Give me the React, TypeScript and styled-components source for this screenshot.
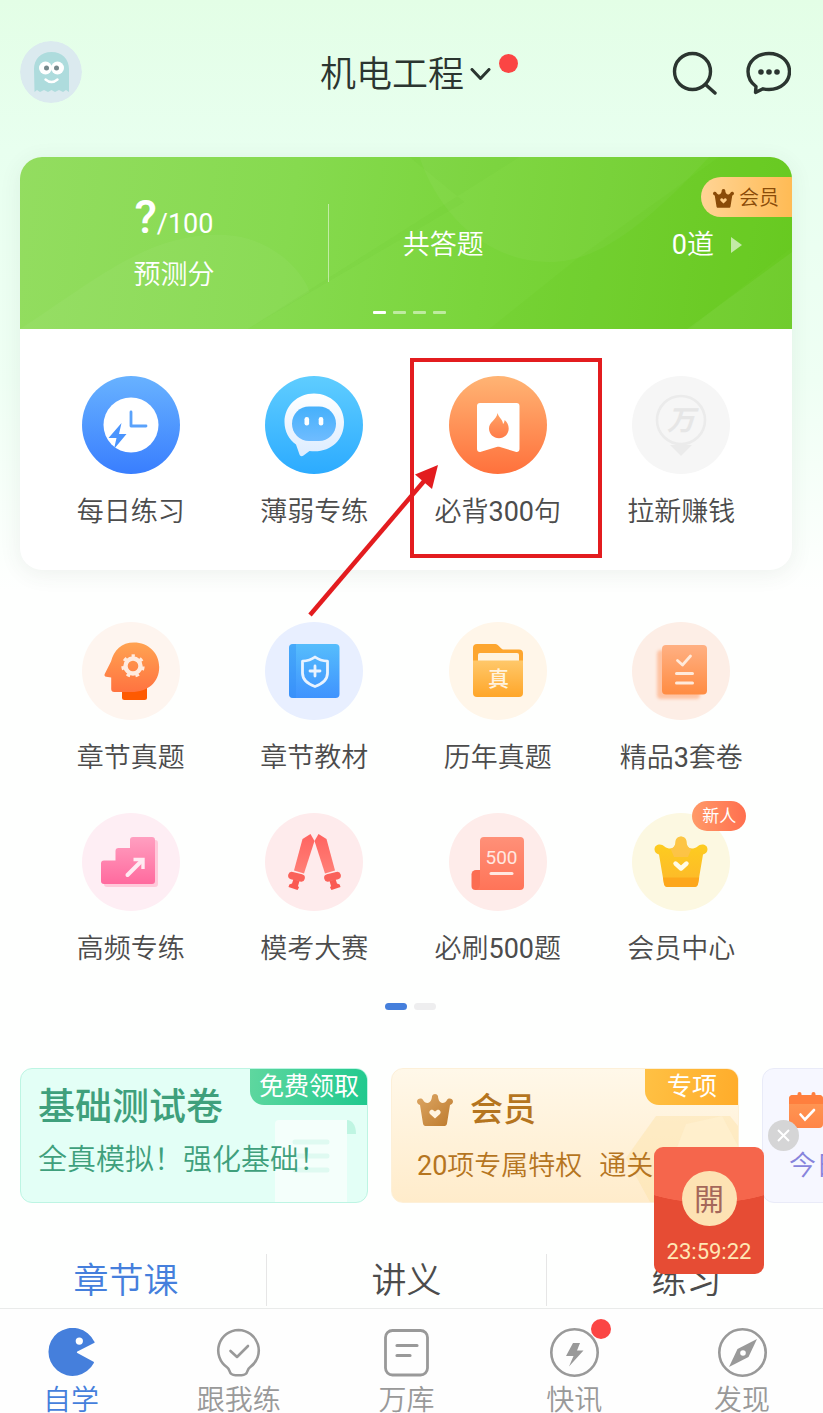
import React from "react";
import styled, { createGlobalStyle } from "styled-components";

const GlobalStyle = createGlobalStyle`
  *, *::before, *::after { box-sizing: border-box; }
  body {
    margin: 0;
    background: #fefffe;
    font-family: Roboto, "Noto Sans CJK SC", sans-serif;
    font-weight: 350;
    color: #4c4c4c;
  }
  button {
    border: 0;
    padding: 0;
    background: none;
    font: inherit;
    color: inherit;
    cursor: pointer;
  }
  a { color: inherit; text-decoration: none; }
  svg { display: block; }
`;

const Page = styled.div`
  position: relative;
  overflow: hidden;
  background: linear-gradient(180deg, #e3fee6 0, #e8ffef 150px, #effff4 380px, #fefffe 590px);
`;

const Content = styled.main`
  padding: 0 31px 0 20px;
`;

/* Latin digits sit one weight above the surrounding Chinese text. */
const Digits = styled.span`
  font-weight: 400;
`;

/* ---------- header ---------- */

const Header = styled.header`
  display: grid;
  grid-template-columns: 1fr auto 1fr;
  align-items: center;
  padding: 41px 32px 54px 20px;
`;

const Avatar = styled.button`
  width: 62px;
  height: 62px;
  border-radius: 50%;
  overflow: hidden;
`;

const Subject = styled.button`
  position: relative;
  display: flex;
  align-items: center;
  gap: 6px;
  padding-top: 6px;
  font-size: 36px;
  line-height: 44px;
  color: #2b3530;
`;

const RedDot = styled.span<{ $top: number; $left: string; $size: number }>`
  position: absolute;
  top: ${(p) => p.$top}px;
  left: ${(p) => p.$left};
  width: ${(p) => p.$size}px;
  height: ${(p) => p.$size}px;
  border-radius: 50%;
  background: #fb4544;
`;

const HeaderActions = styled.div`
  display: flex;
  justify-content: flex-end;
  gap: 27px;
  padding-top: 2px;
`;

/* ---------- score card ---------- */

const Card = styled.section`
  border-radius: 22px;
  background: #fff;
  box-shadow: 0 4px 22px rgba(60, 80, 70, 0.08);
`;

const Banner = styled.div`
  position: relative;
  display: grid;
  grid-template-columns: 2fr 3fr;
  align-items: center;
  height: 172px;
  overflow: hidden;
  border-radius: 22px 22px 0 0;
  background: linear-gradient(98deg, #93dd60 0%, #86da4f 35%, #7ad53b 60%, #69ca22 100%);
  color: #fff;
  font-size: 27px;
  line-height: 36px;
`;

const BannerArt = styled.svg`
  position: absolute;
  inset: 0;
  width: 100%;
  height: 100%;
`;

const Score = styled.div`
  position: relative;
  display: flex;
  flex-direction: column;
  align-items: center;
  gap: 15px;
  height: 78px;
  padding-top: 5px;
  justify-content: center;
  border-right: 1px solid rgba(255, 255, 255, 0.5);
`;

const ScoreValue = styled.div`
  display: flex;
  align-items: baseline;
  line-height: 36px;
  font-weight: 400;
  strong {
    font-size: 46px;
    font-weight: 500;
  }
`;

const Answered = styled.a`
  position: relative;
  display: flex;
  align-items: center;
  padding: 0 50px 0 74px;
  margin-top: 3px;
  b {
    flex: 1;
    font-weight: inherit;
  }
  svg { margin-left: 17px; }
`;

const VipTag = styled.a`
  position: absolute;
  top: 20px;
  right: 0;
  display: flex;
  align-items: center;
  gap: 5px;
  height: 40px;
  padding: 2px 13px 0 12px;
  border-radius: 20px 0 0 20px;
  background: linear-gradient(90deg, #ffd495, #ffbb55);
  color: #8a4b08;
  font-size: 20px;
`;

const Dashes = styled.div`
  position: absolute;
  left: 7px;
  right: 0;
  bottom: 15px;
  display: flex;
  justify-content: center;
  gap: 7px;
`;

const Dash = styled.i<{ $on?: boolean }>`
  width: 13px;
  height: 3px;
  border-radius: 1px;
  background: ${(p) => (p.$on ? "#fff" : "rgba(255,255,255,0.5)")};
`;

/* ---------- icon grid ---------- */

const IconGrid = styled.div<{ $pad: string }>`
  display: grid;
  grid-template-columns: repeat(4, 1fr);
  row-gap: 37px;
  padding: ${(p) => p.$pad};
`;

const Cell = styled.div`
  position: relative;
`;

const Entry = styled.button`
  display: flex;
  flex-direction: column;
  align-items: center;
  gap: 20px;
  width: 100%;
  font-size: 27px;
  line-height: 36px;
  white-space: nowrap;
`;

const IconWrap = styled.span`
  position: relative;
  width: 98px;
  height: 98px;
`;

const NewBadge = styled.span`
  position: absolute;
  top: -12px;
  left: 60px;
  width: 54px;
  height: 30px;
  border-radius: 15px;
  background: linear-gradient(90deg, #ff9a68, #ff6f4f);
  color: #fff;
  font-size: 17px;
  line-height: 30px;
  font-weight: 400;
`;

const HighlightBox = styled.div`
  position: absolute;
  top: -18px;
  left: 4px;
  width: 192px;
  height: 200px;
  border: 4px solid #e31c1f;
  pointer-events: none;
`;

const HighlightArrow = styled.svg`
  position: absolute;
  top: 88px;
  left: -99px;
  z-index: 1;
  pointer-events: none;
`;

const Pager = styled.div`
  display: flex;
  justify-content: center;
  gap: 7px;
  padding: 36px 0 58px 8px;
`;

const PagerDot = styled.i<{ $on?: boolean }>`
  width: 22px;
  height: 7px;
  border-radius: 4px;
  background: ${(p) => (p.$on ? "#457fdc" : "#eeeeef")};
`;

/* ---------- promo strip ---------- */

const PromoStrip = styled.section`
  display: flex;
  gap: 23px;
  padding-left: 20px;
  overflow: hidden;
`;

const Promo = styled.a<{ $bg: string; $edge: string; $color: string }>`
  position: relative;
  flex: 0 0 348px;
  height: 135px;
  overflow: hidden;
  border: 1px solid ${(p) => p.$edge};
  border-radius: 12px;
  background: ${(p) => p.$bg};
  color: ${(p) => p.$color};
`;

const PromoArt = styled.svg`
  position: absolute;
  right: 0;
  bottom: 0;
`;

const PromoBody = styled.div<{ $left: number; $top: number; $gap: number }>`
  position: relative;
  display: flex;
  flex-direction: column;
  gap: ${(p) => p.$gap}px;
  padding: ${(p) => p.$top}px 0 0 ${(p) => p.$left}px;
  white-space: nowrap;
`;

const PromoTitle = styled.div<{ $size: number }>`
  display: flex;
  align-items: center;
  gap: 17px;
  height: 44px;
  font-size: ${(p) => p.$size}px;
  line-height: 44px;
  font-weight: 500;
`;

const PromoText = styled.div<{ $size: number }>`
  display: flex;
  gap: 17px;
  font-size: ${(p) => p.$size}px;
  line-height: 36px;
`;

const PromoTag = styled.span<{ $bg: string; $width: number }>`
  position: absolute;
  top: -1px;
  right: -1px;
  width: ${(p) => p.$width}px;
  height: 37px;
  border-radius: 0 12px 0 14px;
  background: ${(p) => p.$bg};
  color: #fff;
  font-size: 25px;
  line-height: 37px;
  font-weight: 400;
  text-align: center;
`;

/* ---------- tabs and bottom bar ---------- */

const Tabs = styled.div`
  display: grid;
  grid-template-columns: repeat(3, 1fr);
  margin: 51px -3px 2px -14px;
`;

const Tab = styled.button<{ $on?: boolean }>`
  height: 52px;
  padding-top: 4px;
  font-size: 35px;
  line-height: 48px;
  color: ${(p) => (p.$on ? "#457fdc" : "#4c4c4c")};
  & + & { border-left: 1px solid #e6e6e6; }
`;

const BottomBar = styled.nav`
  border-top: 1px solid #e9ebea;
  background: #fefefe;
`;

const BottomItems = styled.div`
  display: grid;
  grid-template-columns: repeat(5, 1fr);
  margin: 0 -3px 0 -13px;
  padding-top: 19px;
`;

const BottomItem = styled.a<{ $on?: boolean }>`
  display: flex;
  flex-direction: column;
  align-items: center;
  gap: 11px;
  font-size: 28px;
  line-height: 25px;
  color: ${(p) => (p.$on ? "#457fdc" : "#999")};
`;

const BottomIcon = styled.span`
  position: relative;
`;

/* ---------- floating red packet ---------- */

const Packet = styled.aside`
  position: absolute;
  right: 59px;
  bottom: 139px;
  width: 110px;
  height: 127px;
`;

const PacketButton = styled.button`
  display: flex;
  flex-direction: column;
  align-items: center;
  gap: 13px;
  width: 100%;
  height: 100%;
  padding-top: 24px;
  border-radius: 9px;
  background: radial-gradient(ellipse 110px 56px at 50% 0, #f5664c 99%, #e64c34 100%);
  color: #ffe7b4;
  font-size: 22px;
  line-height: 26px;
  font-weight: 400;
`;

const Coin = styled.span`
  width: 55px;
  height: 55px;
  border-radius: 50%;
  background: #fde2b3;
  color: #a5675a;
  font-size: 30px;
  line-height: 57px;
  font-weight: 400;
`;

const PacketClose = styled.button`
  position: absolute;
  top: -27px;
  right: -35px;
  display: flex;
  align-items: center;
  justify-content: center;
  width: 31px;
  height: 31px;
  border-radius: 50%;
  background: #d5d5d6;
`;

/* ---------- drawings ---------- */

const Grad = ({ id, from, to }: { id: string; from: string; to: string }) => (
  <linearGradient id={id} x1="0" y1="0" x2="0" y2="1">
    <stop offset="0" stopColor={from} />
    <stop offset="1" stopColor={to} />
  </linearGradient>
);

const Round = ({ fill, children }: { fill: string; children: React.ReactNode }) => (
  <svg width="98" height="98" viewBox="0 0 98 98" aria-hidden="true">
    <circle cx="49" cy="49" r="49" fill={fill} />
    {children}
  </svg>
);

const DailyIcon = () => (
  <Round fill="url(#daily)">
    <defs><Grad id="daily" from="#68b2ff" to="#397efe" /></defs>
    <circle cx="49" cy="49" r="27.5" fill="#fff" />
    <path d="M49 36v14h15" fill="none" stroke="#5aa2fb" strokeWidth="2.8" strokeLinecap="round" strokeLinejoin="round" />
    <path d="M39.5 47 26.500 62h8L32 73l12.500-15H37z" fill="#4a94fd" />
  </Round>
);

const WeakIcon = () => (
  <Round fill="url(#weak)">
    <defs>
      <Grad id="weak" from="#5fcdff" to="#2cabff" />
      <Grad id="weakBubble" from="#ffffff" to="#dcecff" />
      <Grad id="weakFace" from="#45b0fb" to="#6fbcff" />
    </defs>
    <path d="M49 17.5c-16.5 0-29.5 12.500-29.5 28.500 0 9.500 4.500 17.500 11.500 22.500l3.500 10c.7 2 2.500 2 4 1l6-4.500c20 2.500 34.500-10 34.500-29 0-16-13.500-28.500-30-28.500z" fill="url(#weakBubble)" />
    <rect x="27" y="30.5" width="44" height="34.5" rx="17" fill="url(#weakFace)" />
    <rect x="39.5" y="41" width="4.6" height="8.5" rx="2.2" fill="#fff" />
    <rect x="53.7" y="41" width="4.6" height="8.5" rx="2.2" fill="#fff" />
  </Round>
);

const ReciteIcon = () => (
  <Round fill="url(#recite)">
    <defs>
      <Grad id="recite" from="#ffb474" to="#ff713c" />
      <Grad id="flame" from="#ffa366" to="#ff7b48" />
    </defs>
    <path d="M31 27h36.500a3 3 0 0 1 3 3v43c0 2.500-2 3.500-4 2.800L51 71c-1.200-.4-2.200-.4-3.400 0L32 75.800c-2 .7-4-.3-4-2.800V30a3 3 0 0 1 3-3z" fill="#fff" />
    <path d="M48.500 37c1 4.500 5.500 6.500 5.500 11 1-1 1.500-2.500 1.700-4 2.500 2 4 5 4 8.500 0 5.500-4.200 9.700-9.700 9.700s-10-4.200-10-9.700c0-6.500 7.500-8.500 8.500-15.500z" fill="url(#flame)" />
  </Round>
);

const EarnIcon = () => (
  <Round fill="#f6f6f6">
    <circle cx="49" cy="44" r="24" fill="none" stroke="#ebebeb" strokeWidth="2.6" />
    <path d="M38 69h22L49 80z" fill="#ebebeb" />
    <text x="49" y="54" textAnchor="middle" fontSize="28" fontWeight="700" fontStyle="italic" fill="#e6e6e6">万</text>
  </Round>
);

const HeadIcon = () => (
  <Round fill="#fef5ef">
    <defs><Grad id="head" from="#ffa352" to="#ff7340" /></defs>
    <rect x="40" y="60" width="25" height="18" rx="2.5" fill="#fe5a02" />
    <path d="M52 20.500c-12.500 0-20 7.500-23 19l-6.300 12.500c-.6 1.500 0 2.500 1.500 2.700l5 .8V67c0 2 1 3 3 3h17c17 0 28-10 28-25 0-14-11-24.500-25.200-24.500z" fill="url(#head)" />
    <circle cx="51" cy="44" r="7.5" fill="none" stroke="#ffebdf" strokeWidth="4.4" />
    <circle cx="51" cy="44" r="10" fill="none" stroke="#ffebdf" strokeWidth="3.4" strokeDasharray="3.6 5.376" strokeDashoffset="1.8" transform="rotate(-90 51 44)" />
  </Round>
);

const BookIcon = () => (
  <Round fill="#e8efff">
    <defs><Grad id="book" from="#56bdfc" to="#3f93fe" /></defs>
    <rect x="24" y="22" width="50.5" height="54" rx="4" fill="url(#book)" />
    <path d="M28 22h3v54h-3a4 4 0 0 1-4-4V26a4 4 0 0 1 4-4z" fill="#2f8df5" opacity=".4" />
    <path d="M50 35c4 3 8 4 12.500 4.200V51c0 6.500-5.500 11-12.500 13.500C43 62 37.500 57.500 37.500 51V39.200C42 39 46 38 50 35z" fill="none" stroke="#e9f3ff" strokeWidth="2.8" strokeLinejoin="round" />
    <path d="M50 44v10M45 49h10" stroke="#e9f3ff" strokeWidth="2.8" strokeLinecap="round" />
  </Round>
);

const FolderIcon = () => (
  <Round fill="#fff6e9">
    <defs><Grad id="folder" from="#ffc86a" to="#ffa629" /></defs>
    <path d="M28 22h17c2 0 3 .4 4.300 1.600l3 2.800c1 .9 2 1.200 3.500 1.200H70a4 4 0 0 1 4 4V50H24V26a4 4 0 0 1 4-4z" fill="#fda62f" />
    <rect x="29" y="31" width="41" height="14" rx="2" fill="#fff3df" />
    <path d="M24 38.500h50V71a4 4 0 0 1-4 4H28a4 4 0 0 1-4-4z" fill="url(#folder)" />
    <text x="49.5" y="64" textAnchor="middle" fontSize="21" fontWeight="500" fill="#fff3df">真</text>
  </Round>
);

const PapersIcon = () => (
  <Round fill="#fdeee6">
    <defs>
      <Grad id="papers" from="#ffb083" to="#ff8c42" />
      <filter id="soft"><feGaussianBlur stdDeviation="1.6" /></filter>
    </defs>
    <rect x="25" y="28" width="43" height="49" rx="4" fill="#ff9a62" opacity=".5" filter="url(#soft)" />
    <rect x="30" y="23" width="45" height="49.5" rx="4" fill="url(#papers)" />
    <path d="M45.500 38.500l5 4.500 8-9" fill="none" stroke="#ffeadb" strokeWidth="2.8" strokeLinecap="round" strokeLinejoin="round" />
    <path d="M44.500 51.500h16M44.500 61h16" stroke="#ffeadb" strokeWidth="3" strokeLinecap="round" />
  </Round>
);

const stairs = "M51 24h19a3 3 0 0 1 3 3v41a3 3 0 0 1-3 3H22a3 3 0 0 1-3-3V50.500a3 3 0 0 1 3-3h11.500V38a3 3 0 0 1 3-3H48v-8a3 3 0 0 1 3-3z";

const StairsIcon = () => (
  <Round fill="#feeef4">
    <defs><Grad id="stairs" from="#ff9fc0" to="#ff6a9e" /></defs>
    <path d={stairs} transform="translate(3 3)" fill="#ffb9cf" opacity=".7" />
    <path d={stairs} fill="url(#stairs)" />
    <path d="M45.500 62 59 48.500" stroke="#ffeaf2" strokeWidth="4" strokeLinecap="round" />
    <path d="M51.500 46.500h9.500V56" fill="none" stroke="#ffeaf2" strokeWidth="3.4" />
  </Round>
);

const Sword = () => (
  <g>
    <path d="M45.500 21 49.500 28 39 60.500 29 57.500 37.500 26z" fill="url(#sword)" />
    <path d="M28.500 66l6 2-1.500 5 1 1.500-1.500 2.500-9-3 .8-2.500 2.700-1z" fill="#fa5a52" />
    <rect x="23" y="60" width="17" height="7.5" rx="3.7" transform="rotate(15 31.5 63.7)" fill="#fa625a" />
  </g>
);

const SwordsIcon = () => (
  <Round fill="#feebec">
    <defs><Grad id="sword" from="#ff6360" to="#ff8077" /></defs>
    <Sword />
    <g transform="translate(99 0) scale(-1 1)"><Sword /></g>
  </Round>
);

const ScrollIcon = () => (
  <Round fill="#feecea">
    <defs><Grad id="scroll" from="#ff9078" to="#ff7458" /></defs>
    <path d="M27 57h8v20h-8.500a4 4 0 0 1-4-4V61.500A4.500 4.500 0 0 1 27 57z" fill="#fb6d52" />
    <path d="M35 24h36a4 4 0 0 1 4 4v45a4 4 0 0 1-4 4H27c3-1 4-3 4-6V28a4 4 0 0 1 4-4z" fill="url(#scroll)" />
    <text x="52.5" y="51" textAnchor="middle" fontSize="19" fontWeight="400" fill="#ffe8e1">500</text>
    <path d="M42 60.500h21" stroke="#ffe8e1" strokeWidth="3" strokeLinecap="round" />
  </Round>
);

const CrownIcon = () => (
  <Round fill="#fcf8e1">
    <defs><Grad id="crown" from="#fdd01e" to="#fdb72a" /></defs>
    <path d="M43.500 29a5.500 5.500 0 0 1 11 0c0 3 2 6.500 5 6.500 2.500 0 4-.5 6-2 3-3.500 10-2.500 10 2.700 0 3-2 4.600-4.500 5.300L66 71c-.5 2-1.600 3-3.500 3h-27c-1.900 0-3-1-3.500-3l-5-29.500c-2.500-.7-4.500-2.300-4.500-5.300 0-5.200 7-6.200 10-2.700 2 1.500 3.500 2 6 2 3 0 5-3.500 5-6.500z" fill="url(#crown)" />
    <path d="M43.500 29a5.500 5.500 0 0 1 11 0c0 3 2 6.500 5 6.500L56 44H42l-3.500-8.500c3 0 5-3.500 5-6.500z" fill="#fcc255" opacity=".7" />
    <path d="M31 64.500h36.200L66 71c-.5 2-1.600 3-3.500 3h-27c-1.900 0-3-1-3.500-3z" fill="#fda71b" />
    <path d="M43.500 50.500l5.500 5 5.500-5" fill="none" stroke="#fffbe6" strokeWidth="4.4" strokeLinecap="round" strokeLinejoin="round" />
  </Round>
);

const SmallCrown = ({ size, fill, heart }: { size: number; fill: string; heart: string }) => (
  <svg width={size} height={size} viewBox="0 0 36 36" aria-hidden="true">
    <defs>
      <linearGradient id="bronze" x1="0" y1="0" x2="1" y2="1">
        <stop offset="0" stopColor="#dda765" />
        <stop offset="1" stopColor="#bd7a2c" />
      </linearGradient>
    </defs>
    <path d="M15 4a3.200 3.200 0 0 1 6 0c0 3 1.500 7 4.500 7 2 0 3.500-1 4.500-3 1.500-2.500 6-1.500 6 1.500 0 2-1.500 3-3 3.500l-3 18.500c-.3 1.500-1 2.500-2.500 2.500h-19C7 34 6.300 33 6 31.500L3 13c-1.500-.5-3-1.500-3-3.500C0 6.500 4.500 5.500 6 8c1 2 2.500 3 4.500 3 3 0 4.500-4 4.500-7z" fill={fill} />
    <path d="M18 26.500l-5-4.500c-1.800-2 .5-5.500 3.300-3.800L18 19.500l1.700-1.300c2.800-1.700 5.100 1.800 3.300 3.800z" fill={heart} />
  </svg>
);

const GhostAvatar = () => (
  <svg width="62" height="62" viewBox="0 0 62 62" aria-hidden="true">
    <circle cx="31" cy="31" r="31" fill="#dbeaef" />
    <path d="M14 28c0-10 7-17 17.500-17S49 18 49 28v23l-3-2-3 2-4-2-4 2-3.500-2-3.500 2-4-2-4 2-3-2-2.500 2z" fill="#aedcdd" />
    <circle cx="25.500" cy="27" r="6.500" fill="#fff" />
    <circle cx="37.500" cy="27" r="6.500" fill="#fff" />
    <circle cx="26.500" cy="27" r="2.500" fill="#76898c" />
    <circle cx="36.500" cy="27" r="2.500" fill="#76898c" />
    <path d="M25.500 38.500q6 5 12 0" fill="none" stroke="#fff" strokeWidth="2.4" strokeLinecap="round" />
  </svg>
);

const outline = { fill: "none", strokeLinecap: "round", strokeLinejoin: "round" } as const;

const PacManIcon = () => (
  <svg width="49" height="49" viewBox="-1 0 50 49" aria-hidden="true">
    <path d="M48.500 14.500 31 23.500a.9.900 0 0 0 0 1.600L47.500 34a.8.800 0 0 1 .3 1.100A24.500 24.500 0 1 1 48.200 13.400a.8.800 0 0 1 .3 1.100z" fill="#457fdc" />
    <circle cx="33" cy="12.800" r="3.700" fill="#fff" />
  </svg>
);

const BulbIcon = () => (
  <svg width="49" height="49" viewBox="0 0 49 49" {...outline} stroke="#999" strokeWidth="2.6" aria-hidden="true">
    <path d="M24.500 2A20.500 20.500 0 0 0 13 39.300c1.700 1.200 2 2.200 2.500 3.700.8 2.800 3 4.200 6 4.200h6c3 0 5.200-1.400 6-4.200.5-1.500.8-2.500 2.500-3.700A20.500 20.500 0 0 0 24.500 2z" />
    <path d="M16.500 23l6.500 6 11-11" />
  </svg>
);

const LibraryIcon = () => (
  <svg width="49" height="49" viewBox="0 0 49 49" {...outline} stroke="#999" strokeWidth="2.8" aria-hidden="true">
    <rect x="3.500" y="2.500" width="42" height="44.500" rx="7" />
    <path d="M15 17.500h20M15 27.500h13" strokeWidth="3.2" />
  </svg>
);

const NewsIcon = () => (
  <svg width="49" height="49" viewBox="0 0 49 49" aria-hidden="true">
    <circle cx="24.500" cy="24.500" r="23.200" fill="none" stroke="#999" strokeWidth="2.6" />
    <path d="M23 15h7l-3 7.500h6.500L19 38.500 23.500 28H16z" fill="#999" />
  </svg>
);

const CompassIcon = () => (
  <svg width="49" height="49" viewBox="0 0 49 49" aria-hidden="true">
    <circle cx="24.500" cy="24.500" r="23.200" fill="none" stroke="#999" strokeWidth="2.6" />
    <path d="M39 11 30.500 29 11 39l8.500-18z" fill="#999" />
    <circle cx="25" cy="25" r="2.800" fill="#fff" />
  </svg>
);

/* ---------- data ---------- */

type EntryData = { label: string; icon: React.ReactNode; marked?: boolean; badge?: string };

const quick: EntryData[] = [
  { label: "每日练习", icon: <DailyIcon /> },
  { label: "薄弱专练", icon: <WeakIcon /> },
  { label: "必背300句", icon: <ReciteIcon />, marked: true },
  { label: "拉新赚钱", icon: <EarnIcon /> },
];

const features: EntryData[] = [
  { label: "章节真题", icon: <HeadIcon /> },
  { label: "章节教材", icon: <BookIcon /> },
  { label: "历年真题", icon: <FolderIcon /> },
  { label: "精品3套卷", icon: <PapersIcon /> },
  { label: "高频专练", icon: <StairsIcon /> },
  { label: "模考大赛", icon: <SwordsIcon /> },
  { label: "必刷500题", icon: <ScrollIcon /> },
  { label: "会员中心", icon: <CrownIcon />, badge: "新人" },
];

const bottom = [
  { label: "自学", icon: <PacManIcon />, on: true },
  { label: "跟我练", icon: <BulbIcon /> },
  { label: "万库", icon: <LibraryIcon /> },
  { label: "快讯", icon: <NewsIcon />, dot: true },
  { label: "发现", icon: <CompassIcon /> },
];

const Mixed = ({ text }: { text: string }) => (
  <span>
    {text.split(/(\d+)/).map((part, i) => (i % 2 ? <Digits key={i}>{part}</Digits> : part))}
  </span>
);

const Entries = ({ items, pad }: { items: EntryData[]; pad: string }) => (
  <IconGrid $pad={pad}>
    {items.map((it) => (
      <Cell key={it.label}>
        <Entry type="button">
          <IconWrap>
            {it.icon}
            {it.badge && <NewBadge>{it.badge}</NewBadge>}
          </IconWrap>
          <Mixed text={it.label} />
        </Entry>
        {it.marked && (
          <>
            <HighlightBox />
            <HighlightArrow width="134" height="154" viewBox="0 0 134 154" aria-hidden="true">
              <path d="M3 151 118 16" stroke="#e31c1f" strokeWidth="4.5" />
              <path d="M131 1 108 10.500 125 25z" fill="#e31c1f" />
            </HighlightArrow>
          </>
        )}
      </Cell>
    ))}
  </IconGrid>
);

export default function App() {
  return (
    <>
      <GlobalStyle />
      <Page>
        <Header>
          <Avatar type="button" aria-label="头像"><GhostAvatar /></Avatar>
          <Subject type="button">
            机电工程
            <svg width="21" height="14" viewBox="0 0 21 14" {...outline} stroke="#2b3530" strokeWidth="3" aria-hidden="true">
              <path d="M2 1.500 10.500 10.500 19 1.500" />
            </svg>
            <RedDot $top={7} $left="calc(100% + 8px)" $size={19} />
          </Subject>
          <HeaderActions>
            <button type="button" aria-label="搜索">
              <svg width="46" height="44" viewBox="0 0 46 44" {...outline} stroke="#2b3530" strokeWidth="3.4" aria-hidden="true">
                <circle cx="20.500" cy="20.500" r="18" />
                <path d="M33.500 33.500 43 42" />
              </svg>
            </button>
            <button type="button" aria-label="消息">
              <svg width="46" height="44" viewBox="0 0 46 44" {...outline} stroke="#2b3530" strokeWidth="3.4" aria-hidden="true">
                <path d="M24 2.500C12 2.500 3 10.500 3 20.500c0 6.500 3.200 11.500 8 15l-.5 6 7.500-3.700c1.500.4 3.500.7 6 .7 12 0 20.500-8 20.500-18s-8.500-18-20.500-18z" />
                <g fill="#2b3530" stroke="none">
                  <circle cx="16" cy="21" r="2.800" />
                  <circle cx="24" cy="21" r="2.800" />
                  <circle cx="32" cy="21" r="2.800" />
                </g>
              </svg>
            </button>
          </HeaderActions>
        </Header>

        <Content>
          <Card>
            <Banner>
              <BannerArt viewBox="0 0 773 172" preserveAspectRatio="none" aria-hidden="true">
                <path d="M0 172C80 120 130 75 205 78c50 2 80 40 85 57l-62 37z" fill="#fff" opacity=".04" />
                <path d="M228 172 500 0H390L445 45z" fill="#4fb810" opacity=".05" />
                <path d="M400 0c20 60 70 105 130 105 45 0 90-30 160-105z" fill="#fff" opacity=".04" />
                <path d="M560 100 700 0h73v90L670 172H470z" fill="#55bb10" opacity=".08" />
                <path d="M773 95v77H668z" fill="#fff" opacity=".05" />
              </BannerArt>
              <Score>
                <ScoreValue><strong>?</strong>/100</ScoreValue>
                <span>预测分</span>
              </Score>
              <Answered href="#answers">
                <b>共答题</b>
                <Mixed text="0道" />
                <svg width="11" height="16" viewBox="0 0 11 16" aria-hidden="true">
                  <path d="M0 0 11 8 0 16z" fill="#fff" opacity=".6" />
                </svg>
              </Answered>
              <VipTag href="#vip">
                <SmallCrown size={21} fill="#8a4b08" heart="#ffcd86" />
                会员
              </VipTag>
              <Dashes><Dash $on /><Dash /><Dash /><Dash /></Dashes>
            </Banner>
            <Entries items={quick} pad="47px 19px 40px" />
          </Card>
          <Entries items={features} pad="52px 19px 0" />
          <Pager><PagerDot $on /><PagerDot /></Pager>
        </Content>

        <PromoStrip>
          <Promo href="#test" $bg="#e3fff6" $edge="#bdf5e3" $color="#3fa07c">
            <PromoArt width="100" height="84" viewBox="0 0 100 84" aria-hidden="true">
              <path d="M12 2h68v82H8V6a4 4 0 0 1 4-4z" fill="#fff" opacity=".6" />
              <path d="M80 2c5 0 9 5 9 14h-9z" fill="#bff5e2" />
              <path d="M28 24h32M28 38h32M28 52h32" stroke="#dffaf1" strokeWidth="5" strokeLinecap="round" />
            </PromoArt>
            <PromoBody $left={17} $top={17} $gap={12}>
              <PromoTitle $size={37}>基础测试卷</PromoTitle>
              <PromoText $size={29}>全真模拟！强化基础！</PromoText>
            </PromoBody>
            <PromoTag $bg="linear-gradient(100deg, #5fd79f, #1fc98e)" $width={118}>免费领取</PromoTag>
          </Promo>
          <Promo href="#member" $bg="linear-gradient(180deg, #fff8e9, #ffeccb)" $edge="#fdf0d8" $color="#b5751f">
            <PromoArt width="112" height="86" viewBox="0 0 112 86" aria-hidden="true">
              <path d="M30 0h74l8 10v76H24L0 42z" fill="#fde3ab" opacity=".5" />
              <path d="M60 8 96 0l16 30v56H30z" fill="#fff3d6" opacity=".5" />
            </PromoArt>
            <PromoBody $left={25} $top={19} $gap={16}>
              <PromoTitle $size={33}>
                <SmallCrown size={36} fill="url(#bronze)" heart="#fff4e0" />
                会员
              </PromoTitle>
              <PromoText $size={27}>
                <Mixed text="20项专属特权" />
                <span>通关</span>
              </PromoText>
            </PromoBody>
            <PromoTag $bg="linear-gradient(100deg, #ffc144, #ffac2a)" $width={94}>专项</PromoTag>
          </Promo>
          <Promo href="#today" $bg="#f6f7ff" $edge="#e9ebf8" $color="#8784dc">
            <PromoBody $left={26} $top={19} $gap={16}>
              <PromoTitle $size={33}>
                <svg width="36" height="36" viewBox="0 0 36 36" aria-hidden="true">
                  <defs><Grad id="calendar" from="#ff9a56" to="#ff8648" /></defs>
                  <rect x="0" y="3" width="34" height="33" rx="4" fill="url(#calendar)" />
                  <path d="M0 12V7a4 4 0 0 1 4-4h26a4 4 0 0 1 4 4v5z" fill="#ff7f3e" />
                  <path d="M10.500 2v3M24.500 2v3" stroke="#ff7f3e" strokeWidth="4" strokeLinecap="round" />
                  <path d="M11.500 22.500l4.500 5L25 18" fill="none" stroke="#fff" strokeWidth="2.6" strokeLinecap="round" />
                </svg>
              </PromoTitle>
              <PromoText $size={27}>今日</PromoText>
            </PromoBody>
          </Promo>
        </PromoStrip>

        <Tabs>
          <Tab type="button" $on>章节课</Tab>
          <Tab type="button">讲义</Tab>
          <Tab type="button">练习</Tab>
        </Tabs>

        <BottomBar>
          <BottomItems>
            {bottom.map((b) => (
              <BottomItem key={b.label} href={"#" + b.label} $on={b.on}>
                <BottomIcon>
                  {b.icon}
                  {b.dot && <RedDot $top={-9} $left="41px" $size={20} />}
                </BottomIcon>
                {b.label}
              </BottomItem>
            ))}
          </BottomItems>
        </BottomBar>

        <Packet>
          <PacketButton type="button">
            <Coin>開</Coin>
            23:59:22
          </PacketButton>
          <PacketClose type="button" aria-label="关闭">
            <svg width="13" height="13" viewBox="0 0 13 13" stroke="#fff" strokeWidth="2" aria-hidden="true">
              <path d="M1 1l11 11M12 1 1 12" />
            </svg>
          </PacketClose>
        </Packet>
      </Page>
    </>
  );
}
